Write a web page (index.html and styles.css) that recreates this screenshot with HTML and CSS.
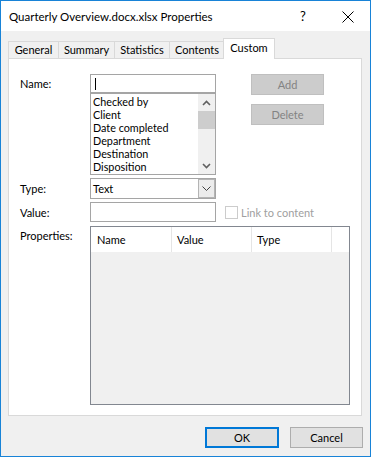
FILE: index.html
```html
<!DOCTYPE html>
<html lang="en">
<head>
    <meta charset="UTF-8">
    <title>Quarterly Overview.docx.xlsx Properties</title>
    <link rel="stylesheet" href="styles.css">
</head>
<body>

    <div class="dialog">
        <div class="titlebar">
            <span class="title">Quarterly Overview.docx.xlsx Properties</span>
            <span class="help">?</span>
            <span class="close">
                <svg width="12" height="12" viewBox="0 0 12 12"><path d="M0.5 0.5 L11.5 11.5 M11.5 0.5 L0.5 11.5" stroke="#000" stroke-width="1" fill="none"/></svg>
            </span>
        </div>

        <div class="content">
            <div class="tabs">
                <div class="tab tab-general">General</div>
                <div class="tab tab-summary">Summary</div>
                <div class="tab tab-stats">Statistics</div>
                <div class="tab tab-contents">Contents</div>
                <div class="tab active">Custom</div>
            </div>

            <div class="panel">
                <div class="row name-row">
                    <label class="lbl">Name:</label>
                    <div class="combo">
                        <div class="field name-field"><span class="caret"></span></div>
                        <div class="listbox">
                            <ul class="items">
                                <li>Checked by</li>
                                <li>Client</li>
                                <li>Date completed</li>
                                <li>Department</li>
                                <li>Destination</li>
                                <li>Disposition</li>
                            </ul>
                            <div class="scrollbar">
                                <span class="arrow">
                                    <svg width="9" height="6" viewBox="0 0 9 6"><path d="M1 5 L4.5 1.5 L8 5" stroke="#606060" stroke-width="1.6" fill="none"/></svg>
                                </span>
                                <span class="thumb"></span>
                                <span class="track"></span>
                                <span class="arrow">
                                    <svg width="9" height="6" viewBox="0 0 9 6"><path d="M1 1 L4.5 4.5 L8 1" stroke="#606060" stroke-width="1.6" fill="none"/></svg>
                                </span>
                            </div>
                        </div>
                    </div>
                    <div class="side-btns">
                        <button class="btn disabled">Add</button>
                        <button class="btn disabled">Delete</button>
                    </div>
                </div>

                <div class="row type-row">
                    <label class="lbl">Type:</label>
                    <div class="field select">
                        <span class="select-text">Text</span>
                        <span class="drop">
                            <svg width="9" height="5" viewBox="0 0 9 5"><path d="M0.5 0.5 L4.5 4.5 L8.5 0.5" stroke="#404040" stroke-width="1" fill="none"/></svg>
                        </span>
                    </div>
                </div>

                <div class="row value-row">
                    <label class="lbl">Value:</label>
                    <div class="field value-field"></div>
                    <div class="check">
                        <span class="box"></span>
                        <span class="check-text">Link to content</span>
                    </div>
                </div>

                <div class="row props-row">
                    <label class="lbl props-lbl">Properties:</label>
                    <div class="listview">
                        <div class="lv-head">
                            <span class="col col-name">Name</span>
                            <span class="col col-value">Value</span>
                            <span class="col col-type">Type</span>
                            <span class="col col-rest"></span>
                        </div>
                        <div class="lv-body"></div>
                    </div>
                </div>
            </div>

            <div class="footer">
                <button class="btn default">OK</button>
                <button class="btn">Cancel</button>
            </div>
        </div>
    </div>

</body>
</html>
```

FILE: styles.css
```css
/* General */
html, body {
    margin: 0;
    padding: 0;
    background: #f0f0f0;
    font-family: 'Lato', 'Liberation Sans', sans-serif;
    font-size: 11px;
    color: #000;
}

.dialog {
    width: 371px;
    height: 457px;
    box-sizing: border-box;
    border: 1px solid #1883d7;
    background: #f0f0f0;
    display: flex;
    flex-direction: column;
}

/* Title bar */
.titlebar {
    height: 30px;
    background: #fff;
    display: flex;
    align-items: center;
    padding-left: 8px;
}

.title {
    flex: 1;
    font-size: 11.5px;
}

.help {
    width: 12px;
    text-align: center;
    margin-right: 33px;
    font-size: 13px;
}

.close {
    display: flex;
    margin-right: 16px;
    margin-top: 1px;
}

/* Tabs */
.content {
    padding: 7px 7px 0 7px;
}

.tabs {
    display: flex;
    align-items: flex-end;
    height: 20px;
}

.tab {
    height: 17px;
    box-sizing: border-box;
    border: 1px solid #d9d9d9;
    border-bottom: none;
    border-right: none;
    background: #f0f0f0;
    text-align: center;
    line-height: 16px;
}

.tab-general { width: 50px; }
.tab-summary { width: 56px; }
.tab-stats { width: 55px; }
.tab-contents { width: 55px; }

.tab.active {
    width: 52px;
    height: 21px;
    margin-left: -1px;
    margin-bottom: -1px;
    border-right: 1px solid #d9d9d9;
    background: #fff;
    line-height: 18px;
    position: relative;
    z-index: 1;
}

/* Panel */
.panel {
    width: 354px;
    height: 358px;
    box-sizing: border-box;
    border: 1px solid #d9d9d9;
    background: #fff;
    padding: 15px 0 0 11px;
}

.row {
    display: flex;
    align-items: center;
}

.lbl {
    width: 70px;
    flex-shrink: 0;
}

.field {
    box-sizing: border-box;
    width: 126px;
    border: 1px solid #a5a5a5;
    background: #fff;
}

/* Name combo */
.name-row {
    align-items: flex-start;
}

.name-row .lbl {
    line-height: 19px;
}

.name-field {
    height: 19px;
    display: flex;
    align-items: center;
    padding-left: 4px;
}

.caret {
    width: 1px;
    height: 12px;
    background: #000;
}

.listbox {
    box-sizing: border-box;
    width: 126px;
    height: 82px;
    border: 1px solid #a5a5a5;
    display: flex;
}

.items {
    list-style: none;
    margin: 0;
    padding: 1px 0 0 2px;
    flex: 1;
}

.items li {
    height: 13px;
    line-height: 13px;
    font-size: 10.8px;
}

.scrollbar {
    width: 17px;
    background: #f0f0f0;
    display: flex;
    flex-direction: column;
}

.arrow {
    height: 17px;
    display: flex;
    align-items: center;
    justify-content: center;
}

.thumb {
    height: 18px;
    background: #cdcdcd;
}

.track {
    flex: 1;
}

.side-btns {
    display: flex;
    flex-direction: column;
    gap: 9px;
    margin-left: 35px;
}

/* Buttons */
.btn {
    font-family: inherit;
    font-size: 11px;
    box-sizing: border-box;
    width: 73px;
    height: 21px;
    padding: 0;
    border: 1px solid #adadad;
    background: #e1e1e1;
    color: #000;
}

.btn.disabled {
    background: #cccccc;
    border-color: #bfbfbf;
    color: #838383;
}

.btn.default {
    width: 74px;
    border: 2px solid #0078d7;
}

/* Type / value */
.type-row {
    margin-top: 3px;
}

.select {
    height: 21px;
    display: flex;
    align-items: center;
    padding-left: 2px;
}

.select-text {
    flex: 1;
}

.drop {
    width: 17px;
    height: 19px;
    box-sizing: border-box;
    border: 1px solid #b4b4b4;
    background: #ececec;
    display: flex;
    align-items: center;
    justify-content: center;
}

.value-row {
    margin-top: 3px;
}

.value-field {
    height: 20px;
}

.check {
    display: flex;
    align-items: center;
    margin-left: 9px;
    color: #a0a0a0;
}

.box {
    width: 13px;
    height: 13px;
    box-sizing: border-box;
    border: 1px solid #cccccc;
    background: #fff;
    margin-right: 3px;
}

/* Properties list */
.props-row {
    margin-top: 4px;
    align-items: flex-start;
}

.props-lbl {
    padding-top: 3px;
}

.listview {
    width: 260px;
    height: 179px;
    box-sizing: border-box;
    border: 1px solid #828790;
    display: flex;
    flex-direction: column;
}

.lv-head {
    height: 25px;
    background: #fff;
    display: flex;
}

.col {
    box-sizing: border-box;
    border-right: 1px solid #e5e5e5;
    padding-left: 5px;
    line-height: 25px;
}

.col-name { width: 81px; padding-left: 6px; }
.col-value { width: 80px; }
.col-type { width: 80px; }
.col-rest { flex: 1; border-right: none; }

.lv-body {
    flex: 1;
    background: #f0f0f0;
}

/* Footer */
.footer {
    display: flex;
    justify-content: flex-end;
    gap: 11px;
    margin-top: 11px;
}
```
